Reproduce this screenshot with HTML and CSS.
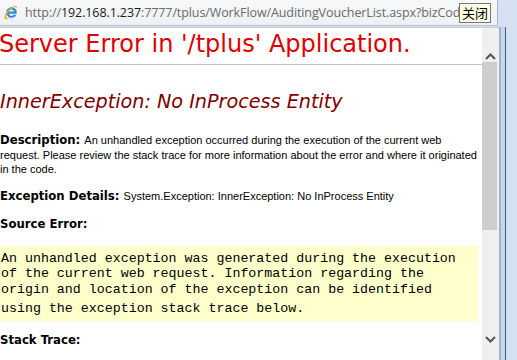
FILE: index.html
```html
<!DOCTYPE html>
<html>
<head>
<meta charset="utf-8">
<link rel="stylesheet" href="styles.css">
</head>
<body>
<div class="window">
  <div class="topbar">
    <div class="address">
      <svg class="ie-icon" width="17" height="17" viewBox="0 0 17 17">
        <path d="M8.6 3.2c-3 0-5.3 2.3-5.3 5.3s2.3 5.3 5.3 5.3c2.2 0 4-1.2 4.8-3h-2.8c-.5.7-1.2 1.1-2 1.1-1.3 0-2.3-.9-2.5-2.2h7.6c0-.4.1-.8.1-1.2 0-3-2.3-5.300-5.2-5.3zM6.2 7.5c.2-1.2 1.2-2.1 2.4-2.1s2.2.9 2.4 2.1z" fill="#2a8be0"/>
        <path d="M13.8 2.2c-1.9-.9-6.3 1-9.5 4.8-2.9 3.5-3.8 7.1-2.3 8 1 .6 2.9-.1 4.9-1.6-1.5.6-2.8.8-3.4.4-1-.7-.1-3.4 2.1-6.1 2.7-3.3 6.2-5.2 7.5-4.4.6.4.5 1.4-.1 2.7.9-1.9 1.3-3.4.8-3.8z" fill="#f3b21b"/>
      </svg>
      <span class="url"><span class="dim">http://</span><span class="host">192.168.1.237</span><span class="dim">:7777/tplus/WorkFlow/AuditingVoucherList.aspx?bizCod</span></span>
      <span class="tooltip">关闭</span>
    </div>
    <div class="frame-top"></div>
  </div>
  <div class="main">
    <div class="page">
      <h1 class="title">Server Error in '/tplus' Application.</h1>
      <hr class="rule">
      <h2 class="subtitle">InnerException: No InProcess Entity</h2>
      <p class="para desc"><b class="label">Description: </b>An unhandled exception occurred during the execution of the current web<br>request. Please review the stack trace for more information about the error and where it originated<br>in the code.</p>
      <p class="para details"><b class="label">Exception Details: </b>System.Exception: InnerException: No InProcess Entity</p>
      <p class="para source"><b class="label">Source Error:</b></p>
      <div class="code">An unhandled exception was generated during the execution<br>of the current web request. Information regarding the<br>origin and location of the exception can be identified<br><span class="last">using the exception stack trace below.</span></div>
      <p class="para stack"><b class="label">Stack Trace:</b></p>
    </div>
    <div class="scrollbar">
      <div class="arrow up"><svg width="11" height="7" viewBox="0 0 11 7"><path d="M1 6l4.5-4.5L10 6" fill="none" stroke="#555" stroke-width="2"/></svg></div>
      <div class="thumb"></div>
      <div class="track"></div>
      <div class="arrow down"><svg width="11" height="7" viewBox="0 0 11 7"><path d="M1 1l4.5 4.5L10 1" fill="none" stroke="#555" stroke-width="2"/></svg></div>
    </div>
    <div class="frame-side">
      <div class="inner"></div>
    </div>
  </div>
</div>
</body>
</html>
```
FILE: styles.css
```css
html, body {
  margin: 0;
  padding: 0;
  background: #fff;
}
.window {
  width: 517px;
  height: 360px;
  overflow: hidden;
  display: flex;
  flex-direction: column;
  background: #d3e1f3;
}
.topbar {
  display: flex;
  height: 27px;
  flex: none;
}
.address {
  position: relative;
  width: 497px;
  height: 25px;
  border-bottom: 1px solid #b9c3cf;
  border-right: 1px solid #a9b6c6;
  background: linear-gradient(#f7f8fa, #eef1f4);
  display: flex;
  align-items: center;
  overflow: hidden;
  white-space: nowrap;
}
.ie-icon {
  flex: none;
  margin: 0 5px 0 3px;
}
.url {
  font-family: "Open Sans", sans-serif;
  font-size: 12.5px;
  color: #6a6a6a;
  letter-spacing: -0.1px;
}
.host {
  color: #1a1a1a;
}
.tooltip {
  position: absolute;
  left: 459px;
  top: 3px;
  height: 18px;
  padding: 0 2px;
  border: 1px solid #767676;
  background: #ffffe6;
  font-family: "Noto Sans CJK SC", sans-serif;
  font-size: 13px;
  line-height: 18px;
  color: #000;
}
.frame-top {
  flex: 1;
  background: #d3e1f3;
}
.main {
  flex: 1;
  display: flex;
  min-height: 0;
}
.page {
  width: 482px;
  flex: none;
  background: #fff;
  border-top: 1px solid #c7ccd2;
  overflow: hidden;
}
.page > * {
  margin-left: -2px;
}
.title {
  font-family: "DejaVu Sans", Verdana, sans-serif;
  font-weight: normal;
  font-size: 24px;
  color: #dd0000;
  margin: 1px 0 0 -1px;
  line-height: 30px;
  white-space: nowrap;
}
.rule {
  margin: 5px 0 0 0;
  border: none;
  border-top: 1px solid #c3c3c3;
  height: 0;
}
.subtitle {
  font-family: "DejaVu Sans", Verdana, sans-serif;
  font-weight: normal;
  font-style: italic;
  font-size: 19.2px;
  color: #800000;
  margin: 26px 0 0 0;
  line-height: 22px;
  white-space: nowrap;
}
.para {
  font-family: "Liberation Sans", Arial, sans-serif;
  font-size: 11px;
  line-height: 14.5px;
  color: #000;
  margin: 0;
  white-space: nowrap;
}
.desc {
  margin-top: 20px;
}
.details {
  margin-top: 12.5px;
}
.source {
  margin-top: 13.5px;
}
.stack {
  margin-top: 12px;
}
.label {
  font-family: "DejaVu Sans", Verdana, sans-serif;
  font-weight: bold;
  font-size: 11.7px;
}
.code {
  background: #ffffcc;
  font-family: "Liberation Mono", "Courier New", monospace;
  font-size: 13.3px;
  line-height: 15.5px;
  color: #000;
  padding: 5px 0 4px 3px;
  margin-top: 14px;
  width: 480px;
  box-sizing: border-box;
  white-space: nowrap;
}
.last {
  display: inline-block;
  margin-top: 4px;
}
.scrollbar {
  width: 17px;
  flex: none;
  background: #f0f0f0;
  display: flex;
  flex-direction: column;
  border-top: 1px solid #c7ccd2;
}
.arrow {
  display: flex;
  align-items: center;
  justify-content: center;
  flex: none;
}
.arrow.up {
  align-items: flex-end;
  padding-bottom: 2px;
  height: 32px;
}
.thumb {
  height: 168px;
  margin: 0 2px 0 0;
  background: #cdcdcd;
  flex: none;
}
.track {
  flex: 1;
}
.arrow.down {
  height: 42px;
}
.frame-side {
  flex: 1;
  display: flex;
  background: #d3e1f3;
  border-left: 2px solid #9fb3cd;
}
.inner {
  width: 4px;
  background: #c7d6ea;
  border-right: 1px solid #4a5a70;
}
```
